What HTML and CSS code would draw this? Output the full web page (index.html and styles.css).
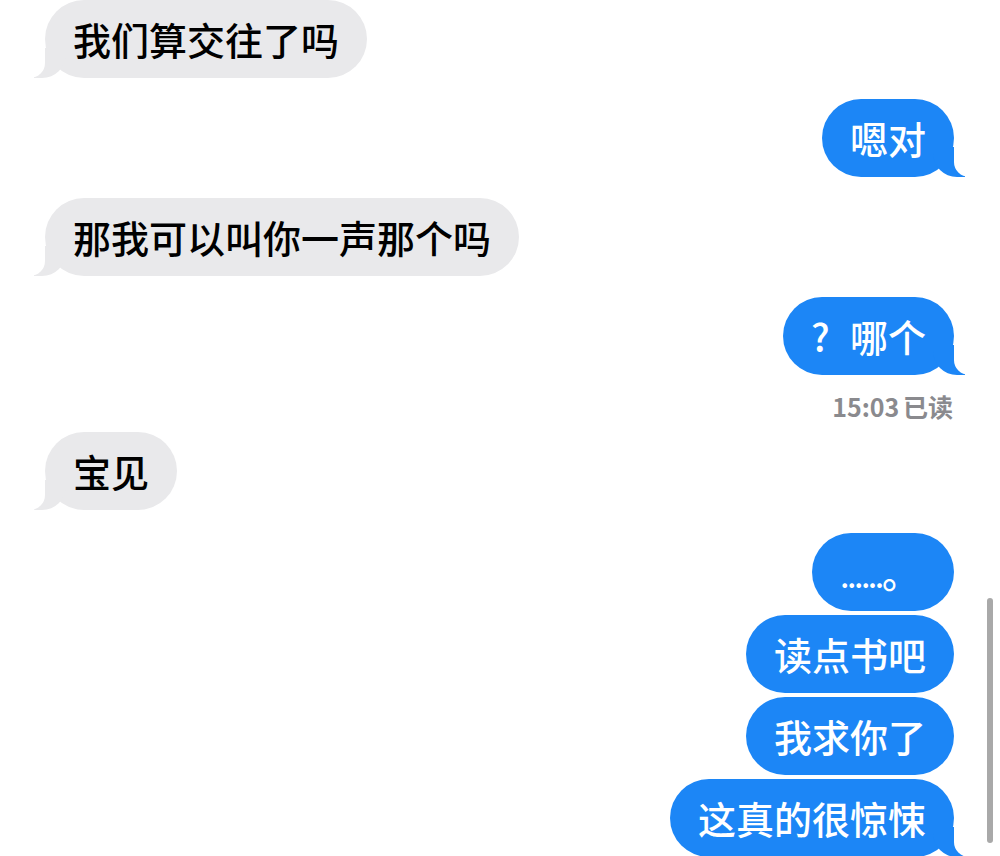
FILE: index.html
```html
<!DOCTYPE html>
<html lang="zh-CN">
<head>
    <meta charset="UTF-8">
    <meta name="viewport" content="width=device-width, initial-scale=1.0">
    <title>信息</title>
    <link rel="stylesheet" href="styles.css">
</head>
<body>
    <div class="chat">
        <div class="msg them tail">我们算交往了吗</div>
        <div class="msg me tail">嗯对</div>
        <div class="msg them tail">那我可以叫你一声那个吗</div>
        <div class="msg me tail"><span class="q">?</span>哪个</div>
        <div class="receipt">15:03 已读</div>
        <div class="msg them tail after-receipt">宝见</div>
        <div class="msg me group-start"><span class="dots">......</span>。</div>
        <div class="msg me grouped">读点书吧</div>
        <div class="msg me grouped">我求你了</div>
        <div class="msg me grouped tail">这真的很惊悚</div>
    </div>
    <div class="scrollbar"></div>
</body>
</html>
```

FILE: styles.css
```css
html, body {
    margin: 0;
    height: 856px;
    overflow: hidden;
    background: #fff;
}
body {
    font-family: "Noto Sans CJK SC", "Noto Sans", sans-serif;
    position: relative;
}
.chat {
    display: flex;
    flex-direction: column;
    padding: 0 46px 0 45px;
}
.msg {
    position: relative;
    font-size: 38px;
    font-weight: 500;
    line-height: 46px;
    height: 46px;
    padding: 16px 28px;
    border-radius: 39px;
    margin-top: 21px;
    white-space: nowrap;
}
.msg:first-child {
    margin-top: 0;
}
.them {
    align-self: flex-start;
    background: #e9e9eb;
    color: #000;
}
.me {
    align-self: flex-end;
    background: #1c86f6;
    color: #fff;
}
.msg.group-start {
    margin-top: 23px;
    padding-left: 28px;
    padding-right: 34px;
}
.msg.grouped {
    margin-top: 4px;
}
.msg.after-receipt {
    margin-top: 11px;
}
.q {
    display: inline-block;
    width: 39px;
}
.dots {
    font-size: 30px;
    line-height: 1;
    letter-spacing: -2px;
}

/* bubble tails */
.tail::before,
.tail::after {
    content: "";
    position: absolute;
    bottom: 0;
    height: 30px;
}
.them.tail::before {
    left: -11px;
    width: 32px;
    background: #e9e9eb;
    border-bottom-right-radius: 24px;
}
.them.tail::after {
    left: -18px;
    width: 18px;
    background: #fff;
    border-bottom-right-radius: 15px;
}
.me.tail::before {
    right: -11px;
    width: 32px;
    background: #1c86f6;
    border-bottom-left-radius: 24px;
}
.me.tail::after {
    right: -18px;
    width: 18px;
    background: #fff;
    border-bottom-left-radius: 15px;
}

.receipt {
    align-self: flex-end;
    margin: 16px 1px 0 0;
    font-size: 25px;
    font-weight: 700;
    line-height: 30px;
    color: #8a8a8e;
    word-spacing: -2px;
}
.scrollbar {
    position: absolute;
    left: 987px;
    top: 598px;
    width: 6px;
    height: 245px;
    border-radius: 3px;
    background: #a9a9a9;
}
```
